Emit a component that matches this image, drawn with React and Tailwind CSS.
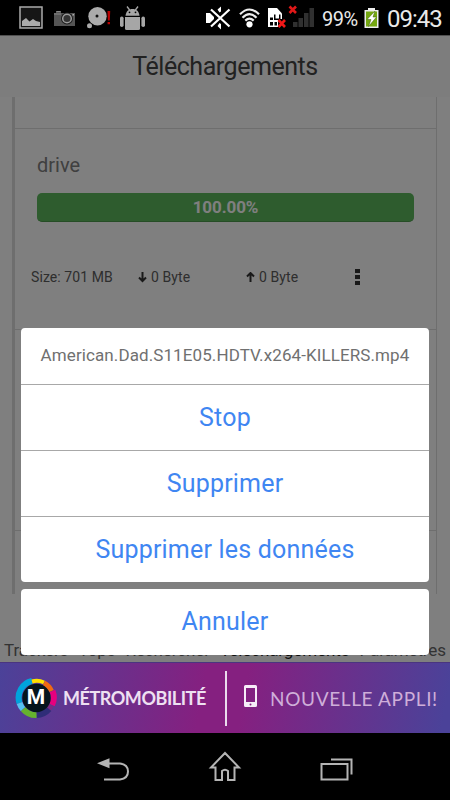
const actions = ["Stop", "Supprimer", "Supprimer les données"];

function PictureIcon() {
  return (
    <svg width="24" height="23" viewBox="0 0 24 23">
      <rect x="1" y="1" width="22" height="21" fill="#161616" stroke="#ababab" strokeWidth="1.5" />
      <path d="M3 20v-5l4-3 3.500 3.500 3.500-2.500 3 2 4 1v4z" fill="#ababab" />
    </svg>
  );
}

function CameraIcon() {
  return (
    <svg width="21" height="16" viewBox="0 0 21 16">
      <path d="M0 3h2V1h5v2h14v13H0z" fill="#555" />
      <path d="M2.500 1.500h4M0 4h7" stroke="#888" fill="none" />
      <circle cx="13" cy="8.500" r="6" fill="#1c1c1c" />
      <circle cx="13" cy="8.500" r="4.300" fill="#333" stroke="#999" strokeWidth="1.500" />
      <rect x="18.500" y="4" width="1.500" height="1.500" fill="#aaa" />
    </svg>
  );
}

function BubbleIcon() {
  return (
    <svg width="24" height="22" viewBox="0 0 24 22">
      <circle cx="10.500" cy="9.300" r="9.200" fill="#ababab" />
      <circle cx="10" cy="9" r="1.500" fill="#111" />
      <circle cx="2.500" cy="18.800" r="2.500" fill="#ababab" />
      <path d="M20.500 4h2.700l-.4 9.500h-1.900zM20.600 15h2.400v2.300h-2.400z" fill="#b80000" />
    </svg>
  );
}

function RobotIcon() {
  return (
    <svg width="25" height="25" viewBox="0 0 25 25" fill="#a6a6a6">
      <path d="M5.500 9.800C6 5 9 3 12.500 3S19 5 19.500 9.800z" />
      <path d="M7 .5l3 4M18 .5l-3 4" stroke="#a6a6a6" strokeWidth="1.300" />
      <circle cx="9.500" cy="6.300" r=".9" fill="#000" />
      <circle cx="15.500" cy="6.300" r=".9" fill="#000" />
      <path d="M5 11h15v11.500q0 1.500-1.500 1.500h-12Q5 24 5 22.500z" />
      <rect x="0" y="10.500" width="3.600" height="10.500" rx="1.800" />
      <rect x="21.400" y="10.500" width="3.600" height="10.500" rx="1.800" />
    </svg>
  );
}

function MuteIcon() {
  return (
    <svg width="26" height="24" viewBox="0 0 26 24">
      <path d="M0 7h4l4 4v2l-4 4H0z" fill="#fff" />
      <path d="M11.500 3.500L15 .5v5l-1.500 1zM11.500 20l3.500 3.500V18l-1.500-1z" fill="#fff" />
      <path d="M5 3.500l18.500 17M23.500 3.500L5 20.500" stroke="#fff" strokeWidth="2.200" />
    </svg>
  );
}

function WifiIcon() {
  return (
    <svg width="21" height="20" viewBox="0 0 21 20" fill="none" stroke="#eee" strokeWidth="2.200">
      <path d="M1 6.300Q10.500-3.300 20 6.300M3.500 9.700Q10.500 2.500 17.500 9.700M6.300 12.600q4.200-4 8.400 0" />
      <circle cx="10.500" cy="16.300" r="3.100" fill="#fff" stroke="none" />
    </svg>
  );
}

function SimIcon() {
  return (
    <svg width="18" height="20" viewBox="0 0 18 20">
      <path d="M0 0h9l5 5.500V19H0z" fill="#fff" />
      <path d="M2 9.500h3V12H2zM6 6.500h1.500v4H11V6.500h1.500V12H6zM2 14h3v3.500H2zM6.500 14H9v3.500H6.500z" fill="#000" />
      <path d="M10 11h8v9h-8z" fill="#000" />
      <path d="M10.500 12l6.500 7M17 12l-6.500 7" stroke="#f01818" strokeWidth="2.600" />
    </svg>
  );
}

function SignalIcon() {
  return (
    <svg width="27" height="22" viewBox="0 0 27 22">
      <path d="M5 17h4.500v5H5zM10.500 13H15v9h-4.500zM16 8h4.500v14H16zM21.500 3H26v19h-4.500z" fill="#303030" />
      <path d="M1.500 1.500l6.500 6.500M8 1.500L1.500 8" stroke="#e01818" strokeWidth="2.600" />
    </svg>
  );
}

function BatteryIcon() {
  return (
    <svg width="15" height="20" viewBox="0 0 15 20">
      <path d="M4 0h7v2h3.500v18H.5V2H4z" fill="#eee" />
      <path d="M2 3.500h11v15H2z" fill="#75a811" />
      <path d="M11 3L3 11.500h4L4.500 18.500l8-9.500H9z" fill="#fff" stroke="#40610a" strokeWidth=".5" />
    </svg>
  );
}

function MetroLogo() {
  return (
    <svg width="42" height="42" viewBox="0 0 42 42">
      <g fill="none" strokeWidth="6">
        <path d="M4.500 26A17 17 0 0 1 17 4" stroke="#00a3dc" />
        <path d="M17 4.500A17 17 0 0 1 29 5.500" stroke="#ffe100" strokeWidth="4" />
        <path d="M29 6A17 17 0 0 1 36.500 14" stroke="#f06a13" strokeWidth="5" />
        <path d="M37.500 14A17 17 0 0 1 37 28" stroke="#e6007e" />
        <path d="M36 28A17 17 0 0 1 33 32" stroke="#7b2a83" />
        <path d="M34 32A17 17 0 0 1 21.500 38" stroke="#2f2d78" />
        <path d="M21.500 38A17 17 0 0 1 8 32" stroke="#65b32e" />
        <path d="M8 32A17 17 0 0 1 4.500 26" stroke="#56c1f0" />
      </g>
      <circle cx="21.500" cy="21" r="14.200" fill="#05151c" />
    </svg>
  );
}

function StatusBar() {
  return (
    <div className="flex h-[35px] shrink-0 items-start bg-black text-[#eaeaea]">
      <div className="ml-[19px] mt-[6px]"><PictureIcon /></div>
      <div className="ml-[11px] mt-[10px]"><CameraIcon /></div>
      <div className="ml-[12px] mt-[7px]"><BubbleIcon /></div>
      <div className="ml-[9px] mt-[6px]"><RobotIcon /></div>
      <div className="ml-[61px] mt-[6px]"><MuteIcon /></div>
      <div className="ml-[7px] mt-[8px]"><WifiIcon /></div>
      <div className="ml-[8px] mt-[8px]"><SimIcon /></div>
      <div className="ml-[2px] mt-[5px]"><SignalIcon /></div>
      <span className="ml-[7px] mt-[5px] w-[38px] text-[20px] leading-[28px] tracking-[-0.5px]">99%</span>
      <div className="ml-[4px] mt-[8px]"><BatteryIcon /></div>
      <span className="ml-[8px] mt-[4px] text-[24px] leading-[30px] tracking-[-1px]">09:43</span>
    </div>
  );
}

function DriveCard() {
  return (
    <div className="h-[201px] border-b border-[#dcdcdc] pt-[23px]">
      <p className="ml-[22px] text-[20px] leading-[26px] text-[#808080]">drive</p>
      <div className="ml-[22px] mt-[15px] flex h-[29px] w-[377px] items-center justify-center rounded-[5px] border-b border-[#4d9a4d] bg-[#5cb85c] pt-[2px] text-[17px] font-bold tracking-[-0.1px] text-white">
        100.00%
      </div>
      <div className="mt-[45px] flex items-center text-[14px] leading-[20px] text-[#5c5c5c]">
        <span className="ml-[16px] w-[107px] tracking-[0.08px]">Size: 701 MB</span>
        <span className="flex w-[108px] items-center gap-[4px] tracking-[0.1px]">
          <svg width="9" height="11" viewBox="0 0 9 11" fill="none" stroke="#333" strokeWidth="2">
            <path d="M4.500 0v9M1 5.500L4.500 9 8 5.500" />
          </svg>
          0 Byte
        </span>
        <span className="flex w-[109px] items-center gap-[4px] tracking-[0.1px]">
          <svg width="9" height="11" viewBox="0 0 9 11" fill="none" stroke="#333" strokeWidth="2">
            <path d="M4.500 10V1M1 4.500L4.500 1 8 4.500" />
          </svg>
          0 Byte
        </span>
        <svg width="5" height="18" viewBox="0 0 5 18" fill="#333">
          <path d="M0 1h5v4H0zM0 7h5v4H0zM0 13h5v4H0z" />
        </svg>
      </div>
    </div>
  );
}

function ActionSheet() {
  return (
    <div className="absolute inset-0 flex flex-col bg-black/50 px-[21px] pt-[293px]">
      <div className="h-[254px] overflow-hidden rounded-[4px] bg-white text-center">
        <p className="h-[56px] text-[17px] leading-[55px] tracking-[0.1px] text-[#707070]">
          American.Dad.S11E05.HDTV.x264-KILLERS.mp4
        </p>
        {actions.map((label) => (
          <button
            key={label}
            className="block h-[66px] w-full border-t border-[#a8a8a8] text-[25px] leading-[65px] tracking-[0.2px] text-[#3f86f2]"
          >
            {label}
          </button>
        ))}
      </div>
      <button className="mt-[7px] h-[66px] rounded-[4px] bg-white pb-px text-[25px] tracking-[0.2px] text-[#3f86f2]">
        Annuler
      </button>
    </div>
  );
}

function AdBanner() {
  return (
    <div className="flex h-[71px] shrink-0 items-center border-t border-[#4a3580] bg-[linear-gradient(100deg,#4b4299_0%,#852080_45%,#852080_54%,#4b4299_98%)] text-[#eee0f2]">
      <div className="relative ml-[15px] h-[42px] w-[42px]">
        <MetroLogo />
        <span className="absolute inset-0 flex items-center justify-center text-[21px] font-bold text-white">M</span>
      </div>
      <span className="ml-[6px] w-[144px] whitespace-nowrap font-[Lato] text-[18px] font-bold tracking-[-0.45px]">
        MÉTROMOBILITÉ
      </span>
      <div className="ml-[18px] h-[55px] w-[2px] bg-[#eadced]" />
      <svg className="mb-[5px] ml-[17px]" width="13" height="22" viewBox="0 0 13 22">
        <path fillRule="evenodd" d="M1.500 0h10Q13 0 13 1.500v19q0 1.500-1.500 1.500h-10Q0 22 0 20.500v-19Q0 0 1.500 0zM2 3v14h9V3z" fill="#f7edf8" />
        <circle cx="6.500" cy="19.500" r="1" fill="#852080" />
      </svg>
      <span className="ml-[13px] mt-[3px] whitespace-nowrap font-[Lato] text-[19px] tracking-[0.65px] text-[#cfaed9]">
        NOUVELLE APPLI!
      </span>
    </div>
  );
}

function NavBar() {
  return (
    <div className="flex h-[67px] shrink-0 items-start bg-black">
      <svg className="ml-[97px] mt-[24px]" width="32" height="25" viewBox="0 0 32 25">
        <path d="M12 6.500h11q8 1 8 8T23 22.500H7" fill="none" stroke="#b4b4b4" strokeWidth="2" />
        <path d="M0 6.300L12.500 1.300v10z" fill="#b4b4b4" />
      </svg>
      <svg className="ml-[79px] mt-[18px]" width="34" height="32" viewBox="0 0 34 32" fill="none" stroke="#b4b4b4" strokeWidth="2">
        <path d="M17 2L3 16.500h4.500V29H14v-9q3-2.500 6 0v9h6.500V16.500H31z" />
      </svg>
      <svg className="ml-[78px] mt-[24px]" width="34" height="25" viewBox="0 0 34 25" fill="none" stroke="#b4b4b4" strokeWidth="2">
        <path d="M1.500 7h26v15.500h-26zM11 2.500h20.500v15" />
      </svg>
    </div>
  );
}

export default function App() {
  return (
    <div className="flex h-[800px] w-[450px] flex-col overflow-hidden bg-black font-[Roboto,sans-serif]">
      <StatusBar />
      <div className="relative flex h-[627px] shrink-0 flex-col bg-white">
        <h1 className="h-[62px] border-t border-[#a0a0a0] bg-[#fafafa] text-center text-[25px] leading-[61px] tracking-[-0.45px] text-[#444]">
          Téléchargements
        </h1>
        <div className="ml-[12px] h-[497px] w-[425px] overflow-hidden border-l-[3px] border-r border-[#dcdcdc]">
          <div className="h-[32px] border-b border-[#dcdcdc]" />
          <DriveCard />
          <div className="h-[201px] border-b border-[#dcdcdc]" />
        </div>
        <nav className="mt-auto flex h-[23px] justify-between px-[4px] text-[17px] leading-[23px] tracking-[-0.1px] text-[#666]">
          <span>Trackers</span>
          <span>Tops</span>
          <span>Rechercher</span>
          <span className="text-[#222]">Téléchargements</span>
          <span>Paramètres</span>
        </nav>
        <ActionSheet />
      </div>
      <AdBanner />
      <NavBar />
    </div>
  );
}
